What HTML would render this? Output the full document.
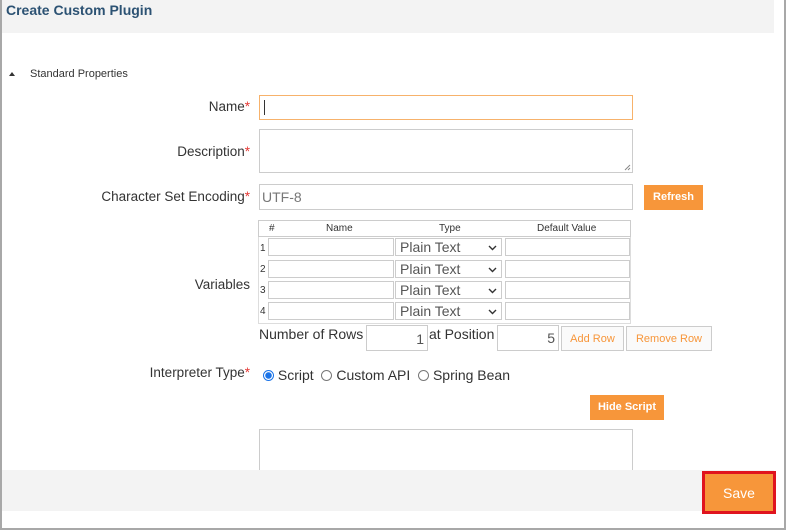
<!DOCTYPE html>
<html><head><meta charset="utf-8"><style>
*{box-sizing:border-box;margin:0;padding:0}
body{width:786px;height:530px;background:#fff;font-family:"Liberation Sans",Arial,sans-serif;color:#333;position:relative;overflow:hidden}
.a{position:absolute}
.frame{left:0;top:0;width:786px;height:530px;border-left:2px solid #a8a8a8;border-right:2px solid #a8a8a8;border-bottom:2px solid #a8a8a8}
.hdr{left:2px;top:0;width:772px;height:33px;background:#f3f3f3}
.title{left:6px;top:2px;font-size:14px;font-weight:bold;color:#2c5273}
.lbl{font-size:13.5px;color:#333;text-align:right;right:536px;white-space:nowrap}
.lbl b{color:#e53935;font-weight:normal}
.inp{border:1px solid #ccc;background:#fff}
.btn{background:#f7963a;color:#fff;font-size:11px;font-weight:bold;text-align:center}
.cell{border:1px solid #ccc;background:#fff;height:18px}
.th{font-size:10px;color:#333}
.sel{font-size:14px;color:#555;padding-left:4px;line-height:17px}
.sel svg{position:absolute;right:4px;top:6px}
.wbtn{border:1px solid #ccc;background:#fafafa;color:#f7963a;font-size:11px;text-align:center;line-height:24px}
.radio{width:11px;height:11px;border-radius:50%;border:1px solid #777;display:inline-block}
.n{font-size:10px;left:260px}
</style></head><body>
<div class="a hdr"></div>
<div class="a title">Create Custom Plugin</div>
<div class="a" style="left:9px;top:72px;width:0;height:0;border-left:3px solid transparent;border-right:3px solid transparent;border-bottom:4px solid #333"></div>
<div class="a" style="left:30px;top:68px;font-size:11px;color:#333">Standard Properties</div>

<div class="a lbl" style="top:99px">Name<b>*</b></div>
<div class="a inp" style="left:259px;top:95px;width:374px;height:25px;border-color:#f7b26b"><div style="position:absolute;left:4px;top:4px;width:1px;height:15px;background:#333"></div></div>

<div class="a lbl" style="top:144px">Description<b>*</b></div>
<div class="a inp" style="left:259px;top:129px;width:374px;height:44px"><svg style="position:absolute;right:1px;bottom:1px" width="7" height="7"><path d="M6 1L1 6M6 4L4 6" stroke="#888"/></svg></div>

<div class="a lbl" style="top:189px">Character Set Encoding<b>*</b></div>
<div class="a inp" style="left:259px;top:184px;width:374px;height:26px;font-size:14px;color:#777;padding:4px 0 0 2px">UTF-8</div>
<div class="a btn" style="left:644px;top:185px;width:59px;height:25px;line-height:25px">Refresh</div>

<div class="a lbl" style="top:277px">Variables</div>
<div class="a" style="left:258px;top:220px;width:373px;height:17px;border:1px solid #ccc"></div>
<div class="a th" style="left:269px;top:223px">#</div>
<div class="a th" style="left:326px;top:223px">Name</div>
<div class="a th" style="left:439px;top:223px">Type</div>
<div class="a th" style="left:537px;top:223px">Default Value</div>
<div class="a" style="left:258px;top:237px;width:373px;height:87px;border:1px solid #ddd;border-top:none"></div>

<div class="a n" style="top:243px">1</div>
<div class="a cell" style="left:268px;top:238px;width:126px"></div>
<div class="a cell sel" style="left:395px;top:238px;width:107px">Plain Text<svg width="9" height="6"><path d="M1 1L4.5 4.5L8 1" stroke="#333" stroke-width="1.4" fill="none"/></svg></div>
<div class="a cell" style="left:505px;top:238px;width:125px"></div>

<div class="a n" style="top:264px">2</div>
<div class="a cell" style="left:268px;top:260px;width:126px"></div>
<div class="a cell sel" style="left:395px;top:260px;width:107px">Plain Text<svg width="9" height="6"><path d="M1 1L4.5 4.5L8 1" stroke="#333" stroke-width="1.4" fill="none"/></svg></div>
<div class="a cell" style="left:505px;top:260px;width:125px"></div>

<div class="a n" style="top:285px">3</div>
<div class="a cell" style="left:268px;top:281px;width:126px"></div>
<div class="a cell sel" style="left:395px;top:281px;width:107px">Plain Text<svg width="9" height="6"><path d="M1 1L4.5 4.5L8 1" stroke="#333" stroke-width="1.4" fill="none"/></svg></div>
<div class="a cell" style="left:505px;top:281px;width:125px"></div>

<div class="a n" style="top:306px">4</div>
<div class="a cell" style="left:268px;top:302px;width:126px"></div>
<div class="a cell sel" style="left:395px;top:302px;width:107px">Plain Text<svg width="9" height="6"><path d="M1 1L4.5 4.5L8 1" stroke="#333" stroke-width="1.4" fill="none"/></svg></div>
<div class="a cell" style="left:505px;top:302px;width:125px"></div>

<div class="a" style="left:259px;top:326px;font-size:14px">Number of Rows</div>
<div class="a inp" style="left:366px;top:325px;width:62px;height:26px;font-size:14px;text-align:right;padding:5px 3px 0 0;color:#555">1</div>
<div class="a" style="left:429px;top:326px;font-size:14px">at Position</div>
<div class="a inp" style="left:497px;top:325px;width:62px;height:26px;font-size:14px;text-align:right;padding:4px 3px 0 0;color:#555">5</div>
<div class="a wbtn" style="left:561px;top:326px;width:63px;height:25px">Add Row</div>
<div class="a wbtn" style="left:626px;top:326px;width:86px;height:25px">Remove Row</div>

<div class="a lbl" style="top:365px">Interpreter Type<b>*</b></div>
<div class="a" style="left:263px;top:367px;font-size:14px;white-space:nowrap;line-height:16px">
<span class="radio" style="border-color:#1a73e8;position:relative;top:1px;background:radial-gradient(circle,#1a73e8 3px,#fff 3.5px)"></span> Script&nbsp;
<span class="radio" style="position:relative;top:1px"></span> Custom API&nbsp;
<span class="radio" style="position:relative;top:1px"></span> Spring Bean</div>

<div class="a btn" style="left:590px;top:395px;width:74px;height:25px;line-height:25px">Hide Script</div>
<div class="a inp" style="left:259px;top:429px;width:374px;height:50px"></div>

<div class="a" style="left:2px;top:470px;width:772px;height:41px;background:#f3f3f3"></div>
<div class="a" style="left:702px;top:471px;width:74px;height:43px;border:3px solid #e0141e;background:#f7963a;color:#fff;font-size:14px;text-align:center;line-height:38px">Save</div>
<div class="a frame"></div>
</body></html>
